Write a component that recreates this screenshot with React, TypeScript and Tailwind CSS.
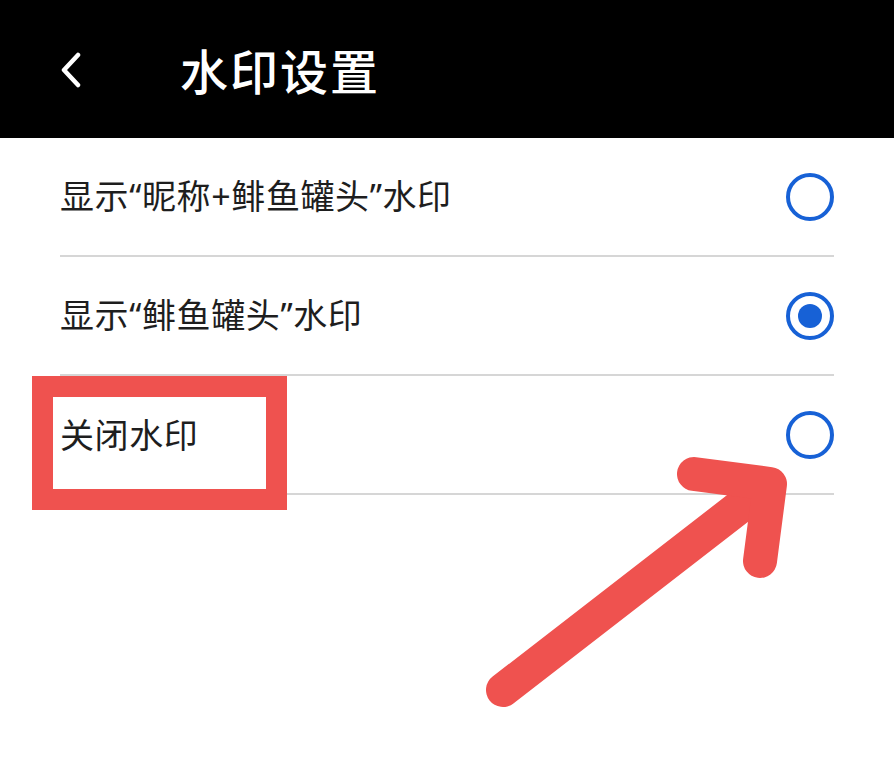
import React from "react"

const options = [
  { label: "显示“昵称+鲱鱼罐头”水印", checked: false },
  { label: "显示“鲱鱼罐头”水印", checked: true },
  { label: "关闭水印", checked: false },
]

// quotes in the reference are narrow, so draw them with a latin face
function Label({ text }: { text: string }) {
  const parts = text.split(/([“”+])/)
  return (
    <span className="text-[34px] text-[#1e1e1e] leading-none tracking-[0.6px] -mt-[2px]">
      {parts.map((p, i) =>
        p === "“" || p === "”" || p === "+" ? (
          <span key={i} style={{ fontFamily: '"Noto Sans", sans-serif' }}>{p}</span>
        ) : (
          <span key={i}>{p}</span>
        )
      )}
    </span>
  )
}

function Radio({ checked }: { checked: boolean }) {
  return (
    <div className="w-[48px] h-[48px] rounded-full border-[4px] border-[#1761d6] flex items-center justify-center">
      {checked && <div className="w-[24px] h-[24px] rounded-full bg-[#1761d6]" />}
    </div>
  )
}

export default function App() {
  return (
    <div
      className="relative w-[894px] h-[768px] bg-white overflow-hidden"
      style={{ fontFamily: '"Noto Sans CJK SC", "Noto Sans", sans-serif' }}
    >
      {/* header */}
      <div className="h-[138px] bg-black flex items-center pl-[58px]">
        <svg width="26" height="36" viewBox="0 0 26 36" className="mt-[2px]">
          <path d="M20 3 L6 18 L20 33" fill="none" stroke="white" strokeWidth="4.5" strokeLinecap="round" strokeLinejoin="round" />
        </svg>
        <h1 className="ml-[96px] text-white text-[48px] leading-none tracking-[2px] font-medium">水印设置</h1>
      </div>

      {/* options */}
      <div className="pl-[60px] pr-[60px]" lang="zh-CN">
        {options.map((o) => (
          <div key={o.label} className="h-[119px] flex items-center justify-between border-b-2 border-[#d6d6d6]">
            <Label text={o.label} />
            <Radio checked={o.checked} />
          </div>
        ))}
      </div>

      {/* annotation: red box */}
      <div className="absolute left-[32px] top-[376px] w-[255px] h-[134px] border-[21px] border-[#ef524f]" />

      {/* annotation: arrow */}
      <svg className="absolute left-0 top-0 pointer-events-none" width="894" height="768" viewBox="0 0 894 768">
        <g fill="none" stroke="#ef524f" strokeWidth="34" strokeLinecap="round" strokeLinejoin="round">
          <path d="M503 690 L764 488" />
          <path d="M694 474 L770 484 L760 561" />
        </g>
      </svg>
    </div>
  )
}
